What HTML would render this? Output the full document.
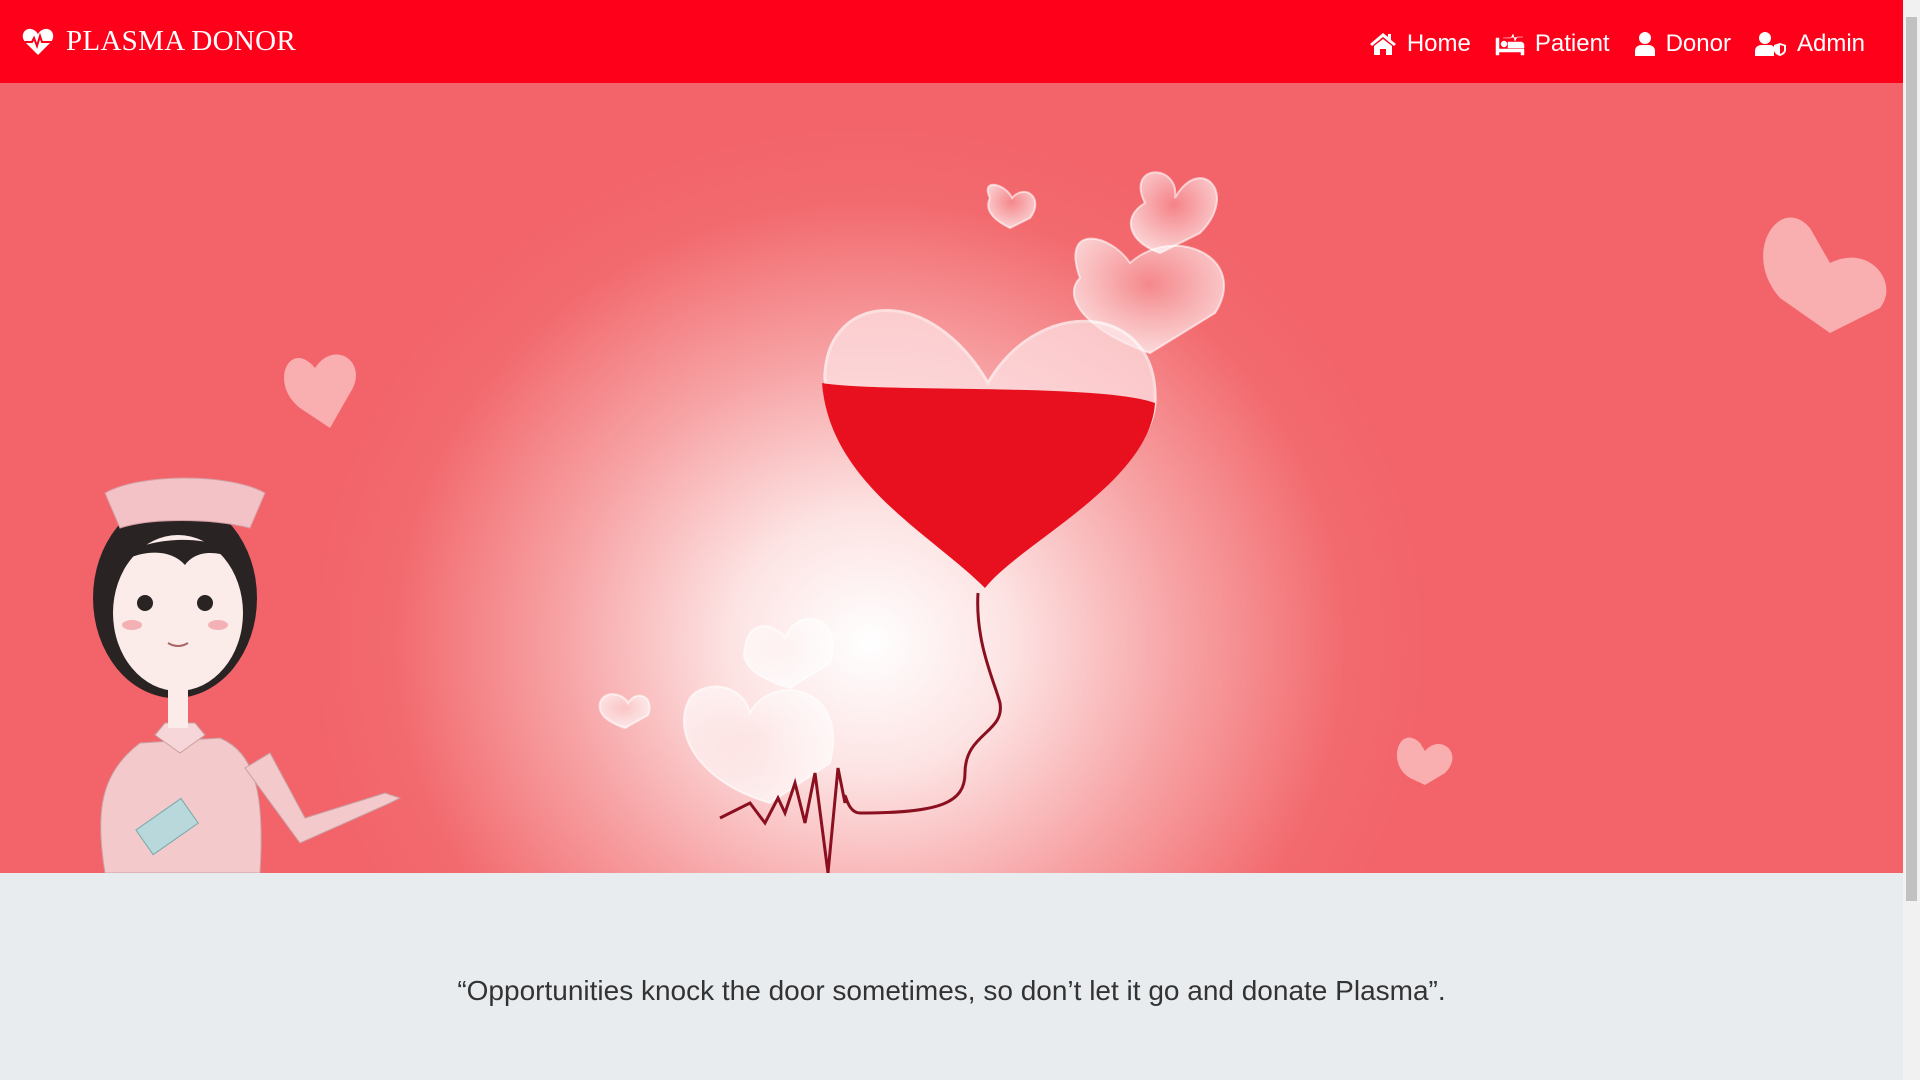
<!DOCTYPE html>
<html><head><meta charset="utf-8"><style>
*{margin:0;padding:0;box-sizing:border-box}
body{width:1920px;height:1080px;overflow:hidden;background:#e9ecef;font-family:"Liberation Sans",sans-serif;position:relative}
.nav{position:absolute;left:0;top:0;width:1903px;height:83px;background:#ff001b;color:#fff}
.logo{position:absolute;left:22px;top:25px;display:flex;align-items:center;font-family:"Liberation Serif",serif;font-size:29px;letter-spacing:0.3px}
.logo svg{margin-right:12px}
.menu{position:absolute;right:38px;top:30px;display:flex;font-size:24px}
.menu div{display:flex;align-items:center;margin-left:24px}
.menu svg{margin-right:10px}
.hero{position:absolute;left:0;top:83px;width:1903px;height:790px;overflow:hidden;
background:radial-gradient(ellipse 560px 520px at 870px 560px,#fff 0%,#fde3e3 25%,#f7a3a5 55%,#f26a6e 85%,#f2646a 100%)}
.quote{position:absolute;left:0;width:1903px;top:975px;text-align:center;font-size:28px;color:#333;font-weight:300}
.sb{position:absolute;right:0;top:0;width:17px;height:1080px;background:#f1f1f1}
.sb .th{position:absolute;left:3px;top:17px;width:11px;height:884px;background:#c1c1c1}
</style></head><body>
<div class="nav">
 <div class="logo"><svg width="32" height="28" viewBox="0 0 32 28"><path d="M16 27 L3 14 C-2 8 2 0 9 1 C12 1.5 14 3 16 6 C18 3 20 1.5 23 1 C30 0 34 8 29 14 Z" fill="#fff"/><path d="M2 14 H10 L12 10 L15 18 L18 8 L20 14 H30" stroke="#ff001b" stroke-width="2" fill="none"/></svg>PLASMA DONOR</div>
 <div class="menu">
  <div><svg width="28" height="24" viewBox="0 0 28 24"><path d="M14 1 L1 12 L3 14 L14 5 L25 14 L27 12 L22 8 V2 H19 V5 Z M5 14 V23 H11 V17 H17 V23 H23 V14 L14 7 Z" fill="#fff"/></svg>Home</div>
  <div><svg width="30" height="24" viewBox="0 0 30 24"><path d="M1 6 H4 V17 H29 V23 H26 V20 H4 V23 H1 Z M6 12 a3 3 0 1 0 6 0 a3 3 0 1 0 -6 0 M13 10 H26 a3 3 0 0 1 3 3 V16 H13 Z M8 6 H16 L18 2 L20 9 L22 5 H28" fill="#fff" stroke="#fff" stroke-width="0.5"/></svg>Patient</div>
  <div><svg width="22" height="24" viewBox="0 0 22 24"><circle cx="11" cy="6" r="6" fill="#fff"/><path d="M1 24 V19 C1 15 4 13 8 13 H14 C18 13 21 15 21 19 V24 Z" fill="#fff"/></svg>Donor</div>
  <div><svg width="32" height="24" viewBox="0 0 32 24"><circle cx="10" cy="6" r="6" fill="#fff"/><path d="M0 24 V19 C0 15 3 13 7 13 H15 C17 13 18 14 19 15 V24 Z" fill="#fff"/><path d="M25 11 L31 13 V18 C31 21 28 23 25 24 C22 23 19 21 19 18 V13 Z" fill="#fff"/><path d="M25 13 V22 C27 21 29 20 29 18 V14 Z" fill="#ff001b"/></svg>Admin</div>
 </div>
</div>
<div class="hero">
<svg width="1903" height="790" viewBox="0 0 1903 790">
 <defs><radialGradient id="b" cx="0.5" cy="0.4" r="0.6"><stop offset="0" stop-color="#fff" stop-opacity="0.2"/><stop offset="1" stop-color="#fff" stop-opacity="0.7"/></radialGradient></defs>
 <g fill="#f9b6b8" opacity="0.9">
  <path d="M315 285 C290 255 268 300 300 325 L330 345 L350 310 C370 280 335 255 315 285 Z"/>
  <path d="M1810 145 C1780 110 1740 170 1780 215 L1830 250 L1880 225 C1900 200 1870 160 1830 180 Z"/>
  <path d="M1420 660 C1400 640 1385 680 1410 695 L1425 702 L1445 690 C1465 670 1440 650 1425 668 Z"/>
 </g>
 <g fill="url(#b)" stroke="#fff" stroke-opacity="0.6" stroke-width="2">
  <path d="M1145 120 C1125 80 1180 80 1175 115 C1200 70 1240 110 1200 150 L1160 170 C1130 160 1120 135 1145 120Z"/>
  <path d="M1080 195 C1060 140 1110 150 1130 180 C1175 140 1250 175 1215 230 L1150 270 C1090 250 1060 215 1080 195Z"/>
  <path d="M990 115 C980 95 1005 100 1012 115 C1025 100 1045 115 1030 135 L1010 145 C990 135 985 125 990 115Z"/>
  <path d="M745 565 C750 530 780 545 785 555 C800 520 845 535 830 580 L790 605 C755 595 740 580 745 565Z"/>
  <path d="M690 615 C700 600 740 595 750 630 C770 590 850 600 830 680 L770 720 C700 700 670 650 690 615Z"/>
  <path d="M600 620 C605 605 625 612 628 620 C638 605 655 615 648 632 L625 645 C605 638 598 630 600 620Z"/>
 </g>
 <path d="M985 480 C960 380 820 350 825 290 C830 210 930 200 988 300 C1040 210 1160 220 1155 320 C1150 390 1020 450 985 480Z" fill="#ffe6e8" opacity="0.7" stroke="#fff" stroke-width="3"/>
 <path d="M822 300 C880 310 1100 300 1155 320 C1150 400 1020 460 985 505 C930 450 830 400 822 300Z" fill="#e8101e"/>
 <path d="M978 510 C975 560 995 600 1000 620 C1005 650 965 650 965 690 C965 720 940 730 860 730 C845 730 845 700 845 720 L838 685 L828 790 L815 690 L805 740 L795 700 L785 730 L778 715 L765 740 L750 720 L720 735" stroke="#8a1020" stroke-width="3" fill="none"/>
 <g transform="translate(80,390)">
  <path d="M25 400 C15 340 20 300 60 270 L140 265 C175 280 185 320 180 400 Z" fill="#f3c9cb" stroke="#c9a0a2"/>
  <path d="M165 295 L220 370 L310 330 L320 325 L305 320 L225 345 L190 280 Z" fill="#f3c9cb" stroke="#c9a0a2"/>
  <path d="M75 262 L100 280 L125 262 L115 250 H85 Z" fill="#f6d6d8" stroke="#c9a0a2"/>
  <ellipse cx="95" cy="125" rx="82" ry="100" fill="#2a2324"/>
  <ellipse cx="98" cy="140" rx="65" ry="78" fill="#fbecea"/>
  <rect x="88" y="210" width="20" height="45" fill="#fbecea"/>
  <path d="M30 95 C50 60 150 55 170 95 C150 80 120 72 105 92 C90 75 60 75 30 95Z" fill="#2a2324"/>
  <path d="M25 20 C60 0 150 0 185 20 L170 55 C130 45 70 45 40 55 Z" fill="#f2c2c6" stroke="#d49ea3"/>
  <circle cx="65" cy="130" r="8" fill="#2a2324"/><circle cx="125" cy="130" r="8" fill="#2a2324"/>
  <ellipse cx="52" cy="152" rx="10" ry="5" fill="#f3b1b5"/><ellipse cx="138" cy="152" rx="10" ry="5" fill="#f3b1b5"/>
  <path d="M88 170 Q98 176 108 170" stroke="#a66" fill="none" stroke-width="2"/>
  <rect x="60" y="340" width="55" height="30" fill="#b8d8dc" stroke="#7aa" transform="rotate(-35 85 355)"/>
 </g>
</svg>
</div>
<div class="quote">“Opportunities knock the door sometimes, so don’t let it go and donate <span style="font-weight:400">Plasma</span>”.</div>
<div class="sb"><div class="th"></div></div>
</body></html>
